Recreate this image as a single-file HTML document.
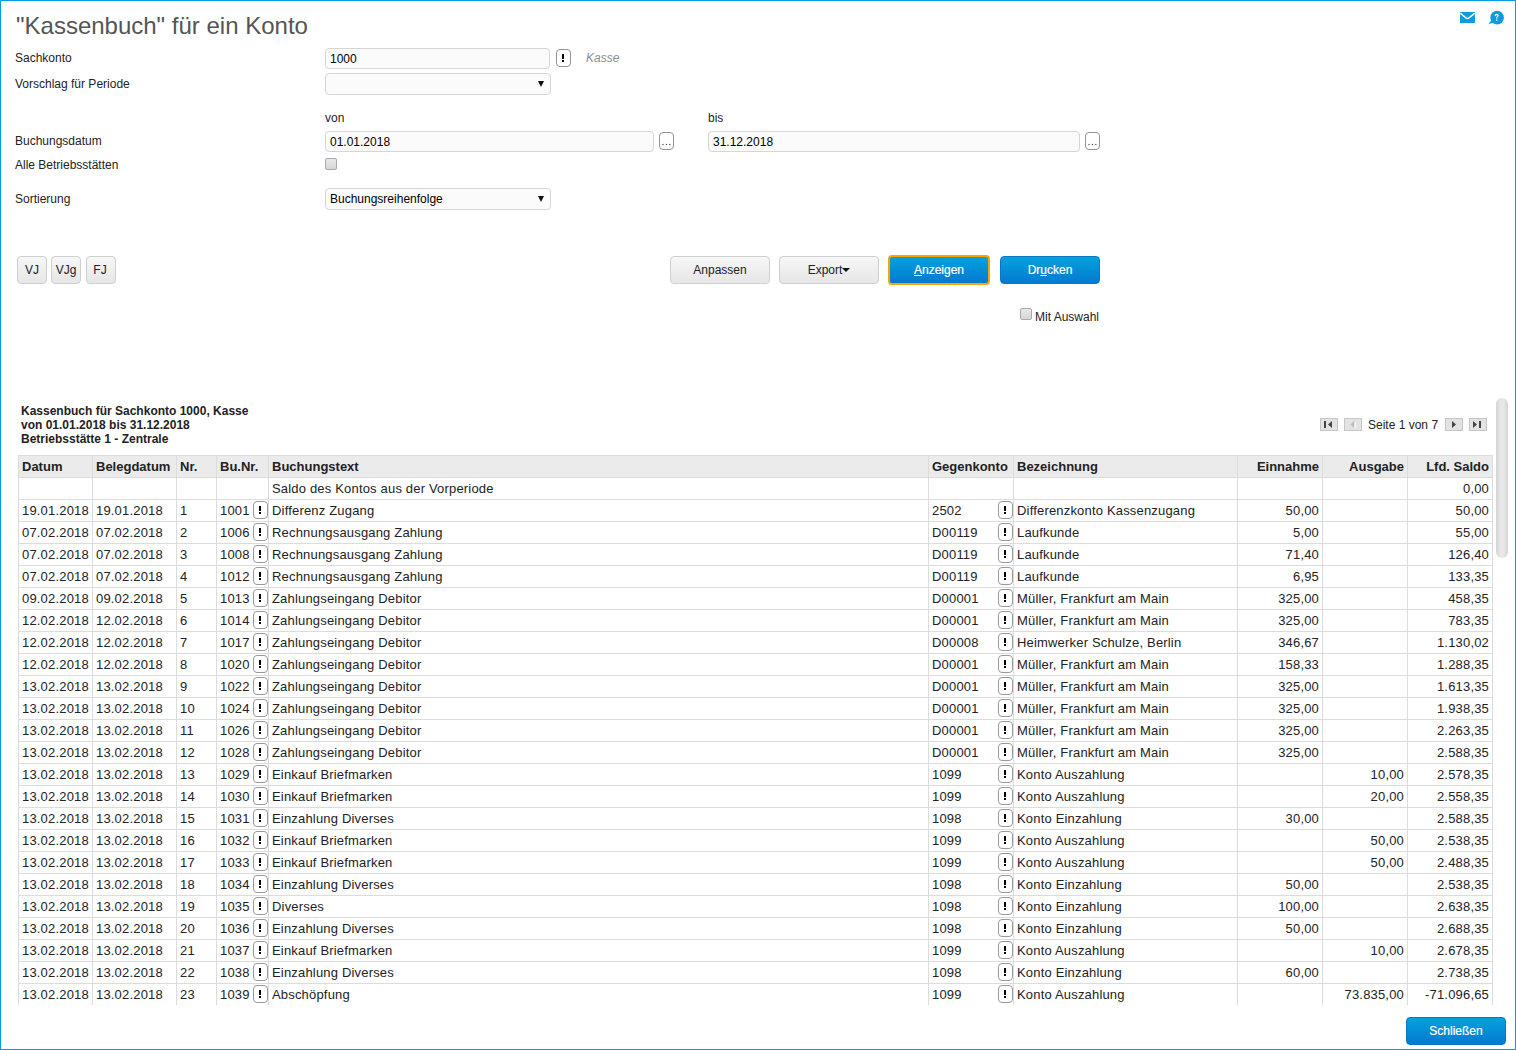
<!DOCTYPE html>
<html><head><meta charset="utf-8">
<style>
*{box-sizing:border-box}
html,body{margin:0;padding:0;width:1516px;height:1050px;overflow:hidden;background:#fff}
body{font-family:"Liberation Sans",sans-serif;color:#222;font-size:12px;position:relative}
.frame{position:absolute;left:0;top:0;width:1516px;height:1050px;border:1px solid #009de0}
.a{position:absolute;white-space:nowrap;line-height:14px}
.title{left:16px;top:12px;font-size:24px;line-height:28px;color:#555}
.lbl{left:15px;color:#222}
.inp{position:absolute;border:1px solid #d6d6d6;border-radius:4px;background:#fbfbfb;padding-left:4px;padding-top:1px;line-height:19px;font-size:12px;color:#000}
.xbtn{position:absolute;border:1px solid #939393;border-radius:4px;background:#fff;width:15px;height:18px}
.xbtn b{position:absolute;left:5px;top:4px;width:2px;height:5px;background:#000}
.xbtn b:after{content:"";position:absolute;left:0;top:6px;width:2px;height:2px;background:#000}
.dots{position:absolute;left:2.5px;top:11px;width:8px;height:1px;background:
 linear-gradient(90deg,#333 0,#333 1px,transparent 1px,transparent 3.5px,#333 3.5px,#333 4.5px,transparent 4.5px,transparent 7px,#333 7px,#333 8px,transparent 8px)}
.arrow{position:absolute;width:0;height:0;border-left:3.5px solid transparent;border-right:3.5px solid transparent;border-top:6px solid #111}
.chk{position:absolute;width:12px;height:12px;border:1px solid #a9a9a9;border-radius:2px;background:linear-gradient(#e9e9e9,#d6d6d6)}
.gbtn{position:absolute;border:1px solid #cfcfcf;border-radius:4px;background:linear-gradient(#f7f7f7,#e6e6e6);text-align:center;color:#222;font-size:12px}
.bbtn{position:absolute;-webkit-text-stroke:0.2px #fff;border-radius:4px;border:1px solid #0b76c2;background:linear-gradient(#04a2dc,#0479d0);text-align:center;color:#fff;font-size:12px}
.rh{left:21px;font-weight:bold;font-size:12px;color:#222;line-height:14px}
.pg{position:absolute;top:418px;width:18px;height:13px;border:1px solid #c6c6c6;background:#e3e3e3}
.tbl{position:absolute;left:18px;top:455px;border-collapse:collapse;table-layout:fixed;font-size:13px;letter-spacing:0.18px;color:#222}
.tbl td,.tbl th{border:1px solid #dcdcdc;height:22px;padding:0 3px 0 3px;white-space:nowrap;overflow:hidden;vertical-align:middle;text-align:left;line-height:15px}
.tbl th{background:#ebebeb;font-weight:bold;letter-spacing:0}
.tbl th.r,.tbl td.r{text-align:right}
.tbl td.bn{position:relative}
.xb{position:absolute;right:0;top:1px;width:15px;height:18px;border:1px solid #999;border-radius:4px;background:#fff;font-style:normal;font-size:0}
.xb:before{content:"";position:absolute;left:5px;top:4px;width:2px;height:5px;background:#000}
.xb:after{content:"";position:absolute;left:5px;top:10px;width:2px;height:2px;background:#000}
.clip{position:absolute;left:0;top:0;width:1516px;height:1005px;overflow:hidden}
.sb{position:absolute;left:1496px;top:398px;width:12px;height:160px;border-radius:6px;background:linear-gradient(90deg,#d5d5d5,#e8e8e8 40%,#e8e8e8 60%,#d5d5d5)}
</style></head><body>
<div class="frame"></div>
<div class="a title">"Kassenbuch" für ein Konto</div>

<!-- top right icons -->
<svg style="position:absolute;left:1460px;top:12px" width="16" height="12" viewBox="0 0 16 12">
 <rect x="0" y="0" width="15" height="11" fill="#0a9be0"/>
 <path d="M0.2 1.2 L6 5.9 Q7.5 7 9 5.9 L14.8 1.2" stroke="#fff" stroke-width="1.5" fill="none"/>
</svg>
<svg style="position:absolute;left:1488px;top:10px" width="17" height="15" viewBox="0 0 17 15">
 <circle cx="9.1" cy="7.6" r="6.8" fill="#0a9be0"/>
 <path d="M0.5 14 L4 9.5 L6.5 12.5 Z" fill="#0a9be0"/>
 <path d="M7.1 5.8 Q7.3 4.3 8.7 4.3 Q10.1 4.4 10.1 5.6 Q10.1 6.5 9.1 7.1 Q8.6 7.5 8.6 8.5" stroke="#fff" stroke-width="1.2" fill="none"/>
 <rect x="8" y="9.5" width="1.3" height="1.3" fill="#fff"/>
</svg>

<div class="a lbl" style="top:51px">Sachkonto</div>
<div class="inp" style="left:325px;top:48px;width:225px;height:21px">1000</div>
<div class="xbtn" style="left:556px;top:49px"><b></b></div>
<div class="a" style="left:586px;top:51px;font-style:italic;color:#8e8e8e">Kasse</div>

<div class="a lbl" style="top:77px">Vorschlag für Periode</div>
<div class="inp" style="left:325px;top:73px;width:226px;height:22px"><span class="arrow" style="left:212px;top:7px"></span></div>

<div class="a" style="left:325px;top:111px">von</div>
<div class="a" style="left:708px;top:111px">bis</div>

<div class="a lbl" style="top:134px">Buchungsdatum</div>
<div class="inp" style="left:325px;top:131px;width:329px;height:21px">01.01.2018</div>
<div class="xbtn" style="left:659px;top:132px"><svg width="13" height="16" style="position:absolute;left:0;top:0"><rect x="2.4" y="10.9" width="1.2" height="1.2" fill="#444"/><rect x="5.9" y="10.9" width="1.2" height="1.2" fill="#444"/><rect x="9.2" y="10.9" width="1.2" height="1.2" fill="#444"/></svg></div>
<div class="inp" style="left:708px;top:131px;width:372px;height:21px">31.12.2018</div>
<div class="xbtn" style="left:1085px;top:132px"><svg width="13" height="16" style="position:absolute;left:0;top:0"><rect x="2.4" y="10.9" width="1.2" height="1.2" fill="#444"/><rect x="5.9" y="10.9" width="1.2" height="1.2" fill="#444"/><rect x="9.2" y="10.9" width="1.2" height="1.2" fill="#444"/></svg></div>

<div class="a lbl" style="top:158px">Alle Betriebsstätten</div>
<div class="chk" style="left:325px;top:158px"></div>

<div class="a lbl" style="top:192px">Sortierung</div>
<div class="inp" style="left:325px;top:188px;width:226px;height:22px">Buchungsreihenfolge<span class="arrow" style="left:212px;top:7px"></span></div>

<div class="gbtn" style="left:17px;top:256px;width:30px;height:28px;line-height:26px">VJ</div>
<div class="gbtn" style="left:51px;top:256px;width:30px;height:28px;line-height:26px">VJg</div>
<div class="gbtn" style="left:86px;top:256px;width:30px;height:28px;line-height:26px;padding-right:2px">FJ</div>

<div class="gbtn" style="left:670px;top:256px;width:100px;height:28px;line-height:26px">Anpassen</div>
<div class="gbtn" style="left:779px;top:256px;width:100px;height:28px;line-height:26px">Export<span style="display:inline-block;width:0;height:0;border-left:4px solid transparent;border-right:4px solid transparent;border-top:4.5px solid #111;vertical-align:2px;margin-left:0"></span></div>
<div class="bbtn" style="left:888px;top:255px;width:102px;height:30px;line-height:26px;border:2px solid #f7a500"><u>A</u>nzeigen</div>
<div class="bbtn" style="left:1000px;top:256px;width:100px;height:28px;line-height:26px">Dr<u>u</u>cken</div>

<div class="chk" style="left:1020px;top:308px"></div>
<div class="a" style="left:1035px;top:310px">Mit Auswahl</div>

<div class="clip">
<div class="a rh" style="top:404px">Kassenbuch für Sachkonto 1000, Kasse<br>von 01.01.2018 bis 31.12.2018<br>Betriebsstätte 1 - Zentrale</div>

<div class="pg" style="left:1320px"><svg width="16" height="11" style="position:absolute;left:0;top:0"><rect x="3" y="2" width="2" height="7" fill="#444"/><path d="M11 2 L7 5.5 L11 9 Z" fill="#444"/></svg></div>
<div class="pg" style="left:1344px"><svg width="16" height="11" style="position:absolute;left:0;top:0"><path d="M9.5 1.5 L5.5 5.5 L9.5 9.5 Z" fill="#bdbdbd"/><rect x="9.5" y="3" width="1.2" height="6" fill="#fff"/></svg></div>
<div class="a" style="left:1368px;top:418px">Seite 1 von 7</div>
<div class="pg" style="left:1445px"><svg width="16" height="11" style="position:absolute;left:0;top:0"><path d="M6 2 L10 5.5 L6 9 Z" fill="#444"/></svg></div>
<div class="pg" style="left:1469px"><svg width="16" height="11" style="position:absolute;left:0;top:0"><path d="M3 2 L7 5.5 L3 9 Z" fill="#444"/><rect x="9" y="2" width="2" height="7" fill="#444"/></svg></div>

<table class="tbl">
<colgroup><col style="width:74px"><col style="width:84px"><col style="width:40px"><col style="width:52px"><col style="width:660px"><col style="width:85px"><col style="width:224px"><col style="width:85px"><col style="width:85px"><col style="width:85px"></colgroup>
<tr><th>Datum</th><th>Belegdatum</th><th>Nr.</th><th>Bu.Nr.</th><th>Buchungstext</th><th>Gegenkonto</th><th>Bezeichnung</th><th class="r">Einnahme</th><th class="r">Ausgabe</th><th class="r">Lfd. Saldo</th></tr>
<tr><td></td><td></td><td></td><td></td><td>Saldo des Kontos aus der Vorperiode</td><td></td><td></td><td></td><td></td><td class="r">0,00</td></tr>
<tr><td>19.01.2018</td><td>19.01.2018</td><td>1</td><td class="bn">1001<i class="xb">!</i></td><td>Differenz Zugang</td><td class="bn">2502<i class="xb">!</i></td><td>Differenzkonto Kassenzugang</td><td class="r">50,00</td><td class="r"></td><td class="r">50,00</td></tr>
<tr><td>07.02.2018</td><td>07.02.2018</td><td>2</td><td class="bn">1006<i class="xb">!</i></td><td>Rechnungsausgang Zahlung</td><td class="bn">D00119<i class="xb">!</i></td><td>Laufkunde</td><td class="r">5,00</td><td class="r"></td><td class="r">55,00</td></tr>
<tr><td>07.02.2018</td><td>07.02.2018</td><td>3</td><td class="bn">1008<i class="xb">!</i></td><td>Rechnungsausgang Zahlung</td><td class="bn">D00119<i class="xb">!</i></td><td>Laufkunde</td><td class="r">71,40</td><td class="r"></td><td class="r">126,40</td></tr>
<tr><td>07.02.2018</td><td>07.02.2018</td><td>4</td><td class="bn">1012<i class="xb">!</i></td><td>Rechnungsausgang Zahlung</td><td class="bn">D00119<i class="xb">!</i></td><td>Laufkunde</td><td class="r">6,95</td><td class="r"></td><td class="r">133,35</td></tr>
<tr><td>09.02.2018</td><td>09.02.2018</td><td>5</td><td class="bn">1013<i class="xb">!</i></td><td>Zahlungseingang Debitor</td><td class="bn">D00001<i class="xb">!</i></td><td>Müller, Frankfurt am Main</td><td class="r">325,00</td><td class="r"></td><td class="r">458,35</td></tr>
<tr><td>12.02.2018</td><td>12.02.2018</td><td>6</td><td class="bn">1014<i class="xb">!</i></td><td>Zahlungseingang Debitor</td><td class="bn">D00001<i class="xb">!</i></td><td>Müller, Frankfurt am Main</td><td class="r">325,00</td><td class="r"></td><td class="r">783,35</td></tr>
<tr><td>12.02.2018</td><td>12.02.2018</td><td>7</td><td class="bn">1017<i class="xb">!</i></td><td>Zahlungseingang Debitor</td><td class="bn">D00008<i class="xb">!</i></td><td>Heimwerker Schulze, Berlin</td><td class="r">346,67</td><td class="r"></td><td class="r">1.130,02</td></tr>
<tr><td>12.02.2018</td><td>12.02.2018</td><td>8</td><td class="bn">1020<i class="xb">!</i></td><td>Zahlungseingang Debitor</td><td class="bn">D00001<i class="xb">!</i></td><td>Müller, Frankfurt am Main</td><td class="r">158,33</td><td class="r"></td><td class="r">1.288,35</td></tr>
<tr><td>13.02.2018</td><td>13.02.2018</td><td>9</td><td class="bn">1022<i class="xb">!</i></td><td>Zahlungseingang Debitor</td><td class="bn">D00001<i class="xb">!</i></td><td>Müller, Frankfurt am Main</td><td class="r">325,00</td><td class="r"></td><td class="r">1.613,35</td></tr>
<tr><td>13.02.2018</td><td>13.02.2018</td><td>10</td><td class="bn">1024<i class="xb">!</i></td><td>Zahlungseingang Debitor</td><td class="bn">D00001<i class="xb">!</i></td><td>Müller, Frankfurt am Main</td><td class="r">325,00</td><td class="r"></td><td class="r">1.938,35</td></tr>
<tr><td>13.02.2018</td><td>13.02.2018</td><td>11</td><td class="bn">1026<i class="xb">!</i></td><td>Zahlungseingang Debitor</td><td class="bn">D00001<i class="xb">!</i></td><td>Müller, Frankfurt am Main</td><td class="r">325,00</td><td class="r"></td><td class="r">2.263,35</td></tr>
<tr><td>13.02.2018</td><td>13.02.2018</td><td>12</td><td class="bn">1028<i class="xb">!</i></td><td>Zahlungseingang Debitor</td><td class="bn">D00001<i class="xb">!</i></td><td>Müller, Frankfurt am Main</td><td class="r">325,00</td><td class="r"></td><td class="r">2.588,35</td></tr>
<tr><td>13.02.2018</td><td>13.02.2018</td><td>13</td><td class="bn">1029<i class="xb">!</i></td><td>Einkauf Briefmarken</td><td class="bn">1099<i class="xb">!</i></td><td>Konto Auszahlung</td><td class="r"></td><td class="r">10,00</td><td class="r">2.578,35</td></tr>
<tr><td>13.02.2018</td><td>13.02.2018</td><td>14</td><td class="bn">1030<i class="xb">!</i></td><td>Einkauf Briefmarken</td><td class="bn">1099<i class="xb">!</i></td><td>Konto Auszahlung</td><td class="r"></td><td class="r">20,00</td><td class="r">2.558,35</td></tr>
<tr><td>13.02.2018</td><td>13.02.2018</td><td>15</td><td class="bn">1031<i class="xb">!</i></td><td>Einzahlung Diverses</td><td class="bn">1098<i class="xb">!</i></td><td>Konto Einzahlung</td><td class="r">30,00</td><td class="r"></td><td class="r">2.588,35</td></tr>
<tr><td>13.02.2018</td><td>13.02.2018</td><td>16</td><td class="bn">1032<i class="xb">!</i></td><td>Einkauf Briefmarken</td><td class="bn">1099<i class="xb">!</i></td><td>Konto Auszahlung</td><td class="r"></td><td class="r">50,00</td><td class="r">2.538,35</td></tr>
<tr><td>13.02.2018</td><td>13.02.2018</td><td>17</td><td class="bn">1033<i class="xb">!</i></td><td>Einkauf Briefmarken</td><td class="bn">1099<i class="xb">!</i></td><td>Konto Auszahlung</td><td class="r"></td><td class="r">50,00</td><td class="r">2.488,35</td></tr>
<tr><td>13.02.2018</td><td>13.02.2018</td><td>18</td><td class="bn">1034<i class="xb">!</i></td><td>Einzahlung Diverses</td><td class="bn">1098<i class="xb">!</i></td><td>Konto Einzahlung</td><td class="r">50,00</td><td class="r"></td><td class="r">2.538,35</td></tr>
<tr><td>13.02.2018</td><td>13.02.2018</td><td>19</td><td class="bn">1035<i class="xb">!</i></td><td>Diverses</td><td class="bn">1098<i class="xb">!</i></td><td>Konto Einzahlung</td><td class="r">100,00</td><td class="r"></td><td class="r">2.638,35</td></tr>
<tr><td>13.02.2018</td><td>13.02.2018</td><td>20</td><td class="bn">1036<i class="xb">!</i></td><td>Einzahlung Diverses</td><td class="bn">1098<i class="xb">!</i></td><td>Konto Einzahlung</td><td class="r">50,00</td><td class="r"></td><td class="r">2.688,35</td></tr>
<tr><td>13.02.2018</td><td>13.02.2018</td><td>21</td><td class="bn">1037<i class="xb">!</i></td><td>Einkauf Briefmarken</td><td class="bn">1099<i class="xb">!</i></td><td>Konto Auszahlung</td><td class="r"></td><td class="r">10,00</td><td class="r">2.678,35</td></tr>
<tr><td>13.02.2018</td><td>13.02.2018</td><td>22</td><td class="bn">1038<i class="xb">!</i></td><td>Einzahlung Diverses</td><td class="bn">1098<i class="xb">!</i></td><td>Konto Einzahlung</td><td class="r">60,00</td><td class="r"></td><td class="r">2.738,35</td></tr>
<tr><td>13.02.2018</td><td>13.02.2018</td><td>23</td><td class="bn">1039<i class="xb">!</i></td><td>Abschöpfung</td><td class="bn">1099<i class="xb">!</i></td><td>Konto Auszahlung</td><td class="r"></td><td class="r">73.835,00</td><td class="r">-71.096,65</td></tr>
</table>
</div>
<div class="sb"></div>

<div class="bbtn" style="left:1406px;top:1017px;width:100px;height:28px;line-height:26px">Schließen</div>
</body></html>
